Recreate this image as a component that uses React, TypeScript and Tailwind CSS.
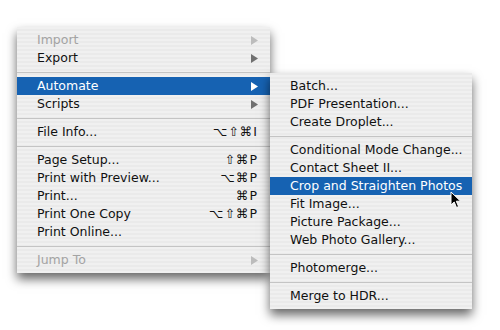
import React from 'react';

type Item =
  | { sep: true }
  | { sep?: false; label: string; key?: string; sub?: boolean; off?: boolean; on?: boolean };

const fileMenu: Item[] = [
  { label: 'Import', sub: true, off: true },
  { label: 'Export', sub: true },
  { sep: true },
  { label: 'Automate', sub: true, on: true },
  { label: 'Scripts', sub: true },
  { sep: true },
  { label: 'File Info...', key: '⌥⇧⌘I' },
  { sep: true },
  { label: 'Page Setup...', key: '⇧⌘P' },
  { label: 'Print with Preview...', key: '⌥⌘P' },
  { label: 'Print...', key: '⌘P' },
  { label: 'Print One Copy', key: '⌥⇧⌘P' },
  { label: 'Print Online...' },
  { sep: true },
  { label: 'Jump To', sub: true, off: true },
];

const automateMenu: Item[] = [
  { label: 'Batch...' },
  { label: 'PDF Presentation...' },
  { label: 'Create Droplet...' },
  { sep: true },
  { label: 'Conditional Mode Change...' },
  { label: 'Contact Sheet II...' },
  { label: 'Crop and Straighten Photos', on: true },
  { label: 'Fit Image...' },
  { label: 'Picture Package...' },
  { label: 'Web Photo Gallery...' },
  { sep: true },
  { label: 'Photomerge...' },
  { sep: true },
  { label: 'Merge to HDR...' },
];

function Arrow({ color }: { color: string }) {
  return (
    <svg width="7" height="9" viewBox="0 0 7 9">
      <path d="M0 0L7 4.5L0 9Z" fill={color} />
    </svg>
  );
}

function Menu({ items, className }: { items: Item[]; className: string }) {
  return (
    <div
      className={`absolute py-1 bg-[repeating-linear-gradient(0deg,#f0f0f0_0px,#f0f0f0_2px,#eaeaea_2px,#eaeaea_4px)] shadow-[0_6px_10px_rgba(0,0,0,0.6)] ${className}`}
    >
      {items.map((it, i) =>
        it.sep ? (
          <div key={i} className="h-[10px] flex items-center">
            <div className="w-full h-px bg-[#c4c4c4]" />
          </div>
        ) : (
          <div
            key={i}
            className={`h-[18px] pl-5 pr-3 flex items-center justify-between whitespace-nowrap ${
              it.on ? 'bg-[#1662b2] text-white' : it.off ? 'text-[#a3a3a3]' : 'text-[#111]'
            }`}
          >
            <span>{it.label}</span>
            {it.key && <span className="tracking-[1px]">{it.key}</span>}
            {it.sub && <Arrow color={it.on ? '#ffffff' : it.off ? '#bcbcbc' : '#707070'} />}
          </div>
        )
      )}
    </div>
  );
}

export default function App() {
  return (
    <div
      className="relative w-[500px] h-[330px] bg-white overflow-hidden text-[12.5px] leading-none"
      style={{ fontFamily: '"DejaVu Sans", sans-serif' }}
    >
      <Menu items={fileMenu} className="left-[17px] top-[27px] w-[253px]" />
      <Menu items={automateMenu} className="left-[270px] top-[73px] w-[202px]" />

      {/* mouse pointer */}
      <svg className="absolute left-[450px] top-[191px]" width="12" height="18" viewBox="0 0 12 18">
        <path d="M1 1L1 14L4.2 11L6.5 16.5L8.6 15.6L6.3 10.2L10.6 10.2Z" fill="#000" stroke="#fff" strokeWidth="1" />
      </svg>
    </div>
  );
}
